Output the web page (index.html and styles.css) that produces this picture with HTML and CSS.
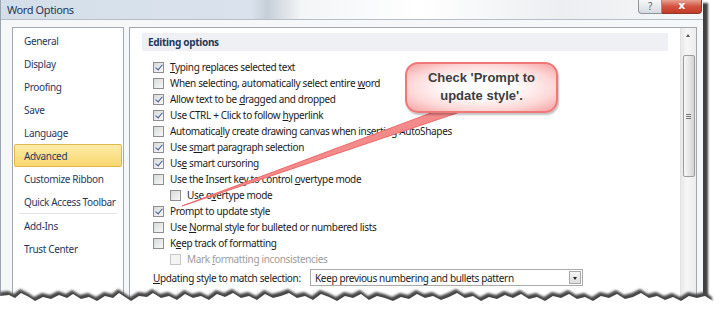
FILE: index.html
```html
<!DOCTYPE html>
<html>
<head>
<meta charset="utf-8">
<link rel="stylesheet" href="styles.css">
</head>
<body>
<div class="window">
  <div class="titlebar">
    <span class="title">Word Options</span>
    <div class="tbtns">
      <div class="btn-help">?</div>
      <div class="btn-close">x</div>
    </div>
  </div>
  <div class="content">
    <nav class="nav">
      <div class="nav-item">General</div>
      <div class="nav-item">Display</div>
      <div class="nav-item">Proofing</div>
      <div class="nav-item">Save</div>
      <div class="nav-item">Language</div>
      <div class="nav-item active">Advanced</div>
      <div class="nav-item">Customize Ribbon</div>
      <div class="nav-item">Quick Access Toolbar</div>
      <div class="nav-sep"></div>
      <div class="nav-item">Add-Ins</div>
      <div class="nav-item">Trust Center</div>
    </nav>
    <section class="panel">
      <div class="main">
        <div class="heading">Editing options</div>
        <div class="opts">
          <div class="row"><span class="cb on"></span><span><u>T</u>yping replaces selected text</span></div>
          <div class="row"><span class="cb"></span><span>When selecting, automatically select entire <u>w</u>ord</span></div>
          <div class="row"><span class="cb on"></span><span>Allow text to be <u>d</u>ragged and dropped</span></div>
          <div class="row"><span class="cb on"></span><span>Use CTRL + Click to follow <u>h</u>yperlink</span></div>
          <div class="row"><span class="cb"></span><span>Automatica<u>l</u>ly create drawing canvas when inserting AutoShapes</span></div>
          <div class="row"><span class="cb on"></span><span>Use s<u>m</u>art paragraph selection</span></div>
          <div class="row"><span class="cb on"></span><span>Us<u>e</u> smart cursoring</span></div>
          <div class="row"><span class="cb"></span><span>Use the Insert key to control <u>o</u>vertype mode</span></div>
          <div class="row indent"><span class="cb"></span><span>Use o<u>v</u>ertype mode</span></div>
          <div class="row"><span class="cb on"></span><span>Prompt to update style</span></div>
          <div class="row"><span class="cb"></span><span>Use <u>N</u>ormal style for bulleted or numbered lists</span></div>
          <div class="row"><span class="cb"></span><span>K<u>e</u>ep track of formatting</span></div>
          <div class="row indent disabled"><span class="cb"></span><span>Mark <u>f</u>ormatting inconsistencies</span></div>
          <div class="row select-row">
            <span class="sel-label"><u>U</u>pdating style to match selection:</span>
            <div class="select"><span>Keep previous numbering and bullets pattern</span><span class="sel-btn"></span></div>
          </div>
        </div>
      </div>
      <div class="scrollbar">
        <div class="sb-up"></div>
        <div class="sb-thumb"><span class="grip"></span></div>
      </div>
    </section>
  </div>
</div>

<svg class="tail" width="720" height="312" viewBox="0 0 720 312">
  <polygon points="439,110 463,111 182,206" fill="#f48b8b" stroke="#ee6a6a" stroke-width="1"/>
</svg>
<div class="callout">Check 'Prompt to<br>update style'.</div>

<svg class="torn" width="720" height="40" viewBox="0 280 720 40">
  <defs><filter id="b"><feGaussianBlur stdDeviation="0.9"/></filter></defs>
  <polygon filter="url(#b)" fill="#474747" points="0,320 0,292 8,291 14,294 20,289 28,293 34,297 42,293 50,295 58,291 66,294 72,290 80,295 88,293 96,297 104,292 112,294 118,289 124,293 130,297 138,292 146,293 152,289 160,294 168,292 176,296 184,290 192,294 200,292 208,296 216,290 224,293 232,289 240,294 248,292 256,296 264,290 272,294 280,292 288,289 296,294 304,292 312,296 320,290 328,293 336,297 344,292 352,294 360,290 368,296 376,292 384,294 392,297 400,293 408,295 416,290 424,294 432,292 440,296 448,293 456,289 464,294 472,292 480,297 488,293 496,295 504,291 512,294 520,290 528,295 536,293 544,297 552,292 560,294 568,290 576,295 584,293 592,297 600,292 608,294 616,290 624,295 632,293 640,289 648,294 656,292 664,296 672,293 680,297 688,292 696,294 704,292 712,297 712,320"/>
  <polygon fill="#ffffff" transform="translate(1,4)" points="-2,320 -2,292 8,291 14,294 20,289 28,293 34,297 42,293 50,295 58,291 66,294 72,290 80,295 88,293 96,297 104,292 112,294 118,289 124,293 130,297 138,292 146,293 152,289 160,294 168,292 176,296 184,290 192,294 200,292 208,296 216,290 224,293 232,289 240,294 248,292 256,296 264,290 272,294 280,292 288,289 296,294 304,292 312,296 320,290 328,293 336,297 344,292 352,294 360,290 368,296 376,292 384,294 392,297 400,293 408,295 416,290 424,294 432,292 440,296 448,293 456,289 464,294 472,292 480,297 488,293 496,295 504,291 512,294 520,290 528,295 536,293 544,297 552,292 560,294 568,290 576,295 584,293 592,297 600,292 608,294 616,290 624,295 632,293 640,289 648,294 656,292 664,296 672,293 680,297 688,292 696,294 704,292 712,297 722,297 722,320"/>
</svg>
</body>
</html>
```

FILE: styles.css
```css
* { box-sizing: border-box; }
body {
  margin: 0;
  width: 720px;
  height: 312px;
  overflow: hidden;
  background: #fff;
  font-family: "Noto Sans", "Open Sans", sans-serif;
  font-size: 10px;
  letter-spacing: -0.35px;
  position: relative;
}
.window {
  width: 703px;
  height: 306px;
  background: #f6f7f9;
  border-left: 1px solid #9aa6b3;
  box-shadow: 5px 3px 2px rgba(0,0,0,0.75);
  display: flex;
  flex-direction: column;
}
.titlebar {
  height: 20px;
  display: flex;
  align-items: flex-start;
  background: linear-gradient(90deg, #d4dee9 0, #dae3ed 250px, #c6ced7 266px, #f3f5f7 300px, #ffffff 420px, #eceef1 560px, #f6f7f8 703px);
  border-bottom: 1px solid #b7bec7;
  flex: none;
}
.title {
  font-size: 11px;
  letter-spacing: -0.4px;
  color: #1e3756;
  padding-left: 6px;
  line-height: 19px;
}
.tbtns {
  margin-left: auto;
  display: flex;
  margin-right: 1px;
}
.btn-help {
  width: 24px;
  height: 14px;
  border: 1px solid #8b95a1;
  border-top: none;
  border-radius: 0 0 0 4px;
  background: linear-gradient(#f6f7f9, #d6dbe1);
  color: #5a6470;
  font-size: 10px;
  line-height: 12px;
  text-align: center;
}
.btn-close {
  width: 40px;
  height: 14px;
  border: 1px solid #8d3a2d;
  border-top: none;
  border-left: none;
  border-radius: 0 0 4px 0;
  background: linear-gradient(#e7a392, #d2533f 50%, #c23c27);
  color: #fff;
  font-family: "DejaVu Sans", sans-serif;
  font-weight: bold;
  font-size: 11px;
  line-height: 12px;
  text-align: center;
}
.content {
  display: flex;
  gap: 5px;
  padding: 7px 6px 0 11px;
  flex: 1;
}
.nav {
  width: 112px;
  background: #fff;
  border: 1px solid #a2abb5;
  padding: 1px;
}
.nav-item {
  height: 23px;
  line-height: 22px;
  padding-left: 9px;
  color: #1f3a62;
  font-size: 10px;
  white-space: nowrap;
  border: 1px solid transparent;
}
.nav-item.active {
  background: linear-gradient(#fdeba8, #f9d770);
  border-color: #e3b64a;
  border-radius: 2px;
}
.nav-sep {
  height: 1px;
  background: #e1e4e8;
  margin: 0 5px;
}
.panel {
  flex: 1;
  background: #fff;
  border: 1px solid #a2a8b0;
  display: flex;
}
.main {
  flex: 1;
  padding: 5px 12px 0 12px;
}
.heading {
  height: 18px;
  line-height: 18px;
  background: #eef0f4;
  padding-left: 6px;
  font-weight: bold;
  color: #1e395b;
  font-size: 10px;
  letter-spacing: -0.3px;
}
.opts {
  margin-top: 8px;
  padding-left: 11px;
}
.row {
  height: 16px;
  display: flex;
  align-items: center;
  gap: 6px;
  color: #1b1b1b;
  white-space: nowrap;
}
.row.indent { padding-left: 17px; }
.row.disabled { color: #9c9c9c; }
.cb {
  width: 11px;
  height: 11px;
  border: 1px solid #8e8f90;
  background: linear-gradient(135deg, #d8d9db, #f8f8f8);
  flex: none;
  position: relative;
}
.row.disabled .cb { border-color: #c7c7c7; background: #f4f4f4; }
.cb.on::after {
  content: "";
  position: absolute;
  left: 3px;
  top: 0px;
  width: 3px;
  height: 6px;
  border-right: 1.5px solid #3c5896;
  border-bottom: 1.5px solid #3c5896;
  transform: rotate(40deg);
}
.select-row {
  margin-top: 2px;
  height: 17px;
  gap: 0;
}
.sel-label { width: 157px; }
.select {
  width: 273px;
  height: 17px;
  border: 1px solid #ababab;
  display: flex;
  align-items: center;
  padding-left: 4px;
  padding-right: 1px;
}
.select span:first-child { flex: 1; }
.sel-btn {
  width: 12px;
  height: 13px;
  border: 1px solid #a9a9a9;
  background: linear-gradient(#f6f6f6, #dedede);
  position: relative;
}
.sel-btn::after {
  content: "";
  position: absolute;
  left: 3px;
  top: 5px;
  border-left: 2.5px solid transparent;
  border-right: 2.5px solid transparent;
  border-top: 3px solid #222;
}
.scrollbar {
  width: 16px;
  background: linear-gradient(90deg, #e9e9e9, #f6f6f6 40%, #ececec);
  border-left: 1px solid #e2e2e2;
  display: flex;
  flex-direction: column;
  align-items: center;
}
.sb-up {
  height: 17px;
  width: 100%;
  position: relative;
}
.sb-up::after {
  content: "";
  position: absolute;
  left: 5px;
  top: 6px;
  border-left: 2.5px solid transparent;
  border-right: 2.5px solid transparent;
  border-bottom: 3px solid #555;
}
.sb-thumb {
  margin-top: 10px;
  width: 12px;
  height: 122px;
  border: 1px solid #9d9d9d;
  border-radius: 2px;
  background: linear-gradient(90deg, #f7f7f7, #e3e3e3 60%, #d4d4d4);
  display: flex;
  align-items: center;
  justify-content: center;
}
.grip {
  width: 5px;
  height: 5px;
  border-top: 1px solid #777;
  border-bottom: 1px solid #777;
  position: relative;
}
.grip::after {
  content: "";
  position: absolute;
  left: 0;
  right: 0;
  top: 1px;
  border-top: 1px solid #777;
}
.tail {
  position: absolute;
  left: 0;
  top: 0;
}
.callout {
  position: absolute;
  left: 405px;
  top: 62px;
  width: 153px;
  height: 51px;
  border: 2px solid #f07878;
  border-radius: 13px;
  background: radial-gradient(ellipse at center, #ffffff 30%, #fdd8d8 68%, #f6a0a0 100%);
  box-shadow: 1px 2px 2px rgba(0,0,0,0.25);
  text-align: center;
  font-family: "Liberation Sans", Arial, sans-serif;
  font-weight: bold;
  font-size: 13px;
  letter-spacing: 0;
  line-height: 18px;
  color: #3d3d3d;
  padding-top: 5px;
}
.torn {
  position: absolute;
  left: 0;
  top: 280px;
}
```
